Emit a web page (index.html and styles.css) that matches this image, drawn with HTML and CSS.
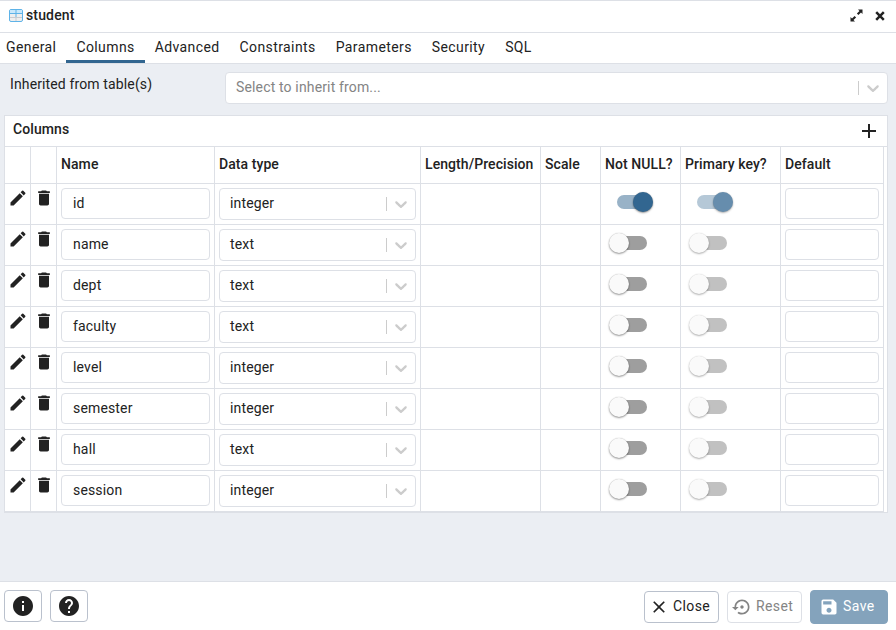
FILE: index.html
```html
<!DOCTYPE html>
<html lang="en">
<head>
<meta charset="utf-8">
<title>student</title>
<link rel="stylesheet" href="styles.css">
</head>
<body>
<svg class="sprite" aria-hidden="true">
  <symbol id="edit" viewBox="0 0 24 24"><path d="M3 17.25V21h3.75L17.81 9.94l-3.75-3.75L3 17.25zM20.71 7.04a1 1 0 0 0 0-1.41l-2.34-2.34a1 1 0 0 0-1.41 0l-1.83 1.83 3.75 3.75 1.83-1.83z"/></symbol>
  <symbol id="trash" viewBox="0 0 24 24"><path d="M6 19c0 1.100.9 2 2 2h8c1.100 0 2-.9 2-2V7H6v12zM19 4h-3.500l-1-1h-5l-1 1H5v2h14V4z"/></symbol>
  <symbol id="chevron" viewBox="0 0 20 20"><path d="M4.516 7.548c0.436-0.446 1.043-0.481 1.576 0l3.908 3.747 3.908-3.747c0.533-0.481 1.141-0.446 1.574 0 0.436 0.445 0.408 1.197 0 1.615-0.406 0.418-4.695 4.502-4.695 4.502-0.217 0.223-0.502 0.335-0.787 0.335s-0.570-0.112-0.789-0.335c0 0-4.287-4.084-4.695-4.502s-0.436-1.170 0-1.615z"/></symbol>
</svg>
<main class="dialog">
  <header class="titlebar">
    <svg class="table-icon" viewBox="0 0 14 13"><rect x=".5" y=".5" width="13" height="12" rx="1.500" fill="#eee" stroke="#5eb3e8"/><path d="M1 1h12v3H1z" fill="#c9e8fb"/><path d="M1 4.500h12M7 1v7" stroke="#5eb3e8"/><path d="M1 8.500h12M7 9v3" stroke="#c8cbd0"/></svg>
    <h1>student</h1>
    <div class="window-actions">
      <svg class="expand" viewBox="0 0 13 13"><path d="M8 .5h4.500V5l-1.500-1.500-2.600 2.600-1.500-1.500L9.500 2zM5 12.500H.5V8L2 9.500l2.600-2.600 1.500 1.500L3.500 11z"/></svg>
      <svg class="dismiss" viewBox="0 0 10 10"><path d="M1.200 1.200l7.600 7.600M8.800 1.200L1.200 8.800"/></svg>
    </div>
  </header>
  <nav class="tabs">
    <a>General</a><a class="active">Columns</a><a>Advanced</a><a>Constraints</a><a>Parameters</a><a>Security</a><a>SQL</a>
  </nav>
  <section class="content">
    <div class="field">
      <label>Inherited from table(s)</label>
      <div class="select wide"><span>Select to inherit from...</span><i></i><svg><use href="#chevron"/></svg></div>
    </div>
    <div class="panel">
      <div class="panel-head"><h2>Columns</h2><svg viewBox="0 0 14 14"><path d="M7 0v14M0 7h14"/></svg></div>
      <div class="grid" id="grid">
        <div class="row head"><div></div><div></div><div>Name</div><div>Data type</div><div>Length/Precision</div><div>Scale</div><div>Not NULL?</div><div>Primary key?</div><div>Default</div></div>
      </div>
    </div>
  </section>
  <footer>
    <button class="btn square"><svg viewBox="0 0 24 24"><path d="M12 2C6.480 2 2 6.480 2 12s4.480 10 10 10 10-4.480 10-10S17.520 2 12 2zm1 15h-2v-6h2v6zm0-8h-2V7h2v2z"/></svg></button>
    <button class="btn square"><svg viewBox="0 0 24 24"><path d="M12 2C6.480 2 2 6.480 2 12s4.480 10 10 10 10-4.480 10-10S17.520 2 12 2zm1 17h-2v-2h2v2zm2.070-7.750l-.9.920C13.450 12.900 13 13.500 13 15h-2v-.5c0-1.100.45-2.100 1.170-2.830l1.240-1.260c.37-.36.59-.86.59-1.410 0-1.100-.9-2-2-2s-2 .9-2 2H8c0-2.210 1.790-4 4-4s4 1.790 4 4c0 .88-.36 1.680-.93 2.250z"/></svg></button>
    <button class="btn close"><svg viewBox="0 0 24 24"><path d="M19 6.410 17.590 5 12 10.590 6.410 5 5 6.410 10.590 12 5 17.590 6.410 19 12 13.410 17.590 19 19 17.590 13.410 12z"/></svg><span>Close</span></button>
    <button class="btn reset"><svg viewBox="0 0 24 24"><path d="M14 12c0-1.100-.9-2-2-2s-2 .9-2 2 .9 2 2 2 2-.9 2-2zm-2-9c-4.970 0-9 4.030-9 9H0l4 4 4-4H5c0-3.870 3.130-7 7-7s7 3.130 7 7-3.130 7-7 7c-1.510 0-2.910-.49-4.060-1.300l-1.420 1.440C8.040 20.300 9.940 21 12 21c4.970 0 9-4.030 9-9s-4.030-9-9-9z"/></svg><span>Reset</span></button>
    <button class="btn save"><svg viewBox="0 0 24 24"><path d="M17 3H5a2 2 0 0 0-2 2v14a2 2 0 0 0 2 2h14c1.100 0 2-.9 2-2V7l-4-4zm-5 16c-1.660 0-3-1.340-3-3s1.340-3 3-3 3 1.340 3 3-1.340 3-3 3zm3-10H5V5h10v4z"/></svg><span>Save</span></button>
  </footer>
</main>
<script src="app.js"></script>
</body>
</html>
```
FILE: app.js
```js
const columns = [
  ['id', 'integer', true],
  ['name', 'text', false],
  ['dept', 'text', false],
  ['faculty', 'text', false],
  ['level', 'integer', false],
  ['semester', 'integer', false],
  ['hall', 'text', false],
  ['session', 'integer', false],
];
const grid = document.getElementById('grid');
for (const [name, type, key] of columns) {
  const on = key ? ' on' : '';
  grid.insertAdjacentHTML('beforeend', `<div class="row">
    <div class="icon"><svg><use href="#edit"/></svg></div>
    <div class="icon"><svg><use href="#trash"/></svg></div>
    <div><div class="input">${name}</div></div>
    <div><div class="select"><span>${type}</span><i></i><svg><use href="#chevron"/></svg></div></div>
    <div></div><div></div>
    <div><div class="switch${on}"><b></b></div></div>
    <div><div class="switch disabled${on}"><b></b></div></div>
    <div><div class="input"></div></div>
  </div>`);
}
```
FILE: styles.css
```css
* { box-sizing: border-box; }
body { margin: 0; background: #fff; color: #222; font: 14px/20px Roboto, sans-serif; letter-spacing: .15px; }
h1, h2 { margin: 0; font-size: 14px; line-height: 20px; font-weight: 500; letter-spacing: .08px; }
h1 { margin-top: -1px; letter-spacing: .15px; }
svg { display: block; fill: currentColor; flex: none; }
.sprite { display: none; }
.dialog { height: 630px; display: flex; flex-direction: column; border-top: 1px solid #dde0e6; }
.titlebar { height: 32px; display: flex; align-items: center; padding: 0 11px 2px 9px; border-bottom: 1px solid #dde0e6; }
.table-icon { width: 14px; height: 13px; margin-right: 3px; }
.window-actions { display: flex; align-items: center; gap: 12px; margin-left: auto; }
.expand { width: 13px; height: 13px; }
.dismiss { width: 10px; height: 10px; fill: none; stroke: currentColor; stroke-width: 2.5; }
.tabs { height: 31px; display: flex; border-bottom: 1px solid #dde0e6; padding-right: 10px; margin-left: -4px; letter-spacing: .4px; }
.tabs a { padding: 4px 10px 0; height: 30px; border-bottom: 3px solid transparent; }
.tabs .active { border-color: #326690; }
.content { flex: 1; background: #ebeef3; padding: 8px 8px 0 4px; }
.field { display: flex; height: 32px; }
.field label { width: 221px; padding: 2px 6px; letter-spacing: .13px; }
.select { display: flex; align-items: center; width: 197px; height: 32px; background: #fff; border: 1px solid #dde0e6; border-radius: 4px; padding: 0 4px 0 10px; }
.select span { flex: 1; margin-top: -2px; }
.select i { width: 1px; height: 14px; background: #ccc; margin-right: 4px; }
.select svg { width: 20px; height: 20px; color: #ccc; }
.select.wide { width: 663px; }
.wide span { color: #848484; }
.panel { margin-top: 11px; width: 884px; background: #fff; border: 1px solid #dde0e6; }
.panel-head { height: 31px; display: flex; justify-content: space-between; padding: 3px 11px 0 8px; border-bottom: 1px solid #dde0e6; }
.panel-head svg { width: 14px; height: 14px; margin-top: 5px; stroke: #222; stroke-width: 2; }
.grid { width: 879px; }
.row { display: grid; grid-template-columns: 26px 26px 158px 206px 120px 60px 80px 100px 103px; height: 41px; }
.row > div { border-right: 1px solid #dde0e6; border-bottom: 1px solid #dde0e6; padding: 4px; }
.row.head { height: 37px; font-weight: 500; letter-spacing: .07px; }
.row.head > div { padding: 7px 0 0 4px; white-space: nowrap; }
.row .icon { padding: 4px 3px; }
.icon svg { width: 20px; height: 20px; }
.input { height: 31px; border: 1px solid #dde0e6; border-radius: 4px; padding: 4px 11px; }
.switch { position: relative; width: 34px; height: 14px; margin: 7px 0 0 8px; border-radius: 7px; background: #9e9e9e; }
.switch b { position: absolute; left: -4px; top: -3px; width: 20px; height: 20px; border-radius: 50%; background: #fafafa; box-shadow: 0 1px 2px rgba(0,0,0,.4), 0 0 1px rgba(0,0,0,.25); }
.switch.on { margin-left: 12px; background: #98b2c7; }
.switch.on b { left: 16px; background: #326690; }
.switch.disabled { background: #c1c1c1; }
.switch.disabled b { box-shadow: 0 1px 2px rgba(0,0,0,.3), 0 0 1px rgba(0,0,0,.15); }
.switch.disabled.on { background: #b5c8d7; }
.switch.disabled.on b { background: #668dad; }
footer { height: 49px; border-top: 1px solid #dde0e6; display: flex; align-items: flex-start; gap: 8px; padding: 8px 8px 0 4px; }
.btn { display: flex; align-items: center; height: 32px; padding: 0 8px 0 4px; background: #fff; border: 1px solid #bac1cd; border-radius: 4px; color: #222; font: 14px/20px Roboto, sans-serif; letter-spacing: .4px; white-space: nowrap; }
.btn svg { width: 20px; height: 20px; margin-right: 4px; }
.btn span { margin-top: -2px; }
.btn.square { width: 38px; padding: 0; justify-content: center; }
.square svg { width: 24px; height: 24px; margin: 0; }
.close { width: 75px; margin: 1px 0 0 auto; }
.reset { width: 75px; margin-top: 1px; color: #848484; border-color: #dde0e6; }
.btn.save { width: 78px; height: 34px; color: #fff; background: #84a3bc; border-color: #84a3bc; padding-left: 8px; }
```
